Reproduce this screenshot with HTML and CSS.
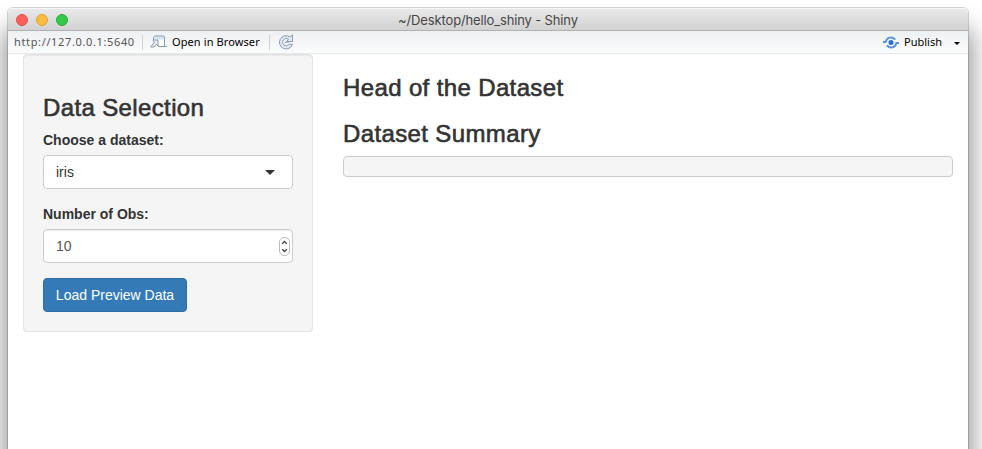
FILE: index.html
```html
<!DOCTYPE html>
<html lang="en">
<head>
<meta charset="utf-8">
<title>~/Desktop/hello_shiny - Shiny</title>
<link rel="stylesheet" href="styles.css">
</head>
<body>
<div class="window">
  <header class="titlebar">
    <div class="lights"><i class="light red"></i><i class="light yellow"></i><i class="light green"></i></div>
    <span class="title">~/Desktop/hello_shiny - Shiny</span>
  </header>
  <nav class="toolbar">
    <span class="url">http://127.0.0.1:5640</span>
    <i class="divider"></i>
    <svg class="icon-open" width="18" height="14" viewBox="0 0 18 14">
      <path d="M4.500 1.500h10v10h-10z" fill="#fff"/>
      <path d="M4.500 1.500h10v3h-10z" fill="#d2e7f5"/>
      <path d="M3.500 5V2.500Q3.700 1 5.500 1h8Q14.500 1 14.500 2.200V11.500M8 11.500h8.800" fill="none" stroke="#8d9aae"/>
      <path d="M3 5h5v6L6.300 9.200 4 12H.6L4.300 7.500z" fill="#e4edf6" stroke="#8492a8" stroke-width=".9"/>
    </svg>
    <span class="open">Open in Browser</span>
    <i class="divider second"></i>
    <svg class="icon-reload" width="16" height="16" viewBox="0 0 16 16">
      <path d="M11.800 2.900 14.500.9v6.600H8.500L10.500 5.300A3.700 3.700 0 1 0 11.300 10.200H14.400A6.600 6.600 0 1 1 11.800 2.900Z" fill="#e2eaf5" stroke="#8d9ab0"/>
      <path d="M10.800 8.200H8.200Q7 8.200 7 9.300" stroke="#8d9ab0" fill="none"/>
    </svg>
    <svg class="icon-publish" width="16" height="13" viewBox="0 0 16 13">
      <circle cx="8" cy="6.500" r="2.500" fill="#2673d9"/>
      <path d="M0 6h2.600C4 .9 8.500.2 12.300 3.500M16 7h-2.600C12 12.100 7.500 12.800 3.700 9.500" fill="none" stroke="#5b93da" stroke-width="1.900"/>
    </svg>
    <span class="publish">Publish</span>
    <i class="caret small"></i>
  </nav>
  <main class="content">
    <form class="sidebar">
      <h3>Data Selection</h3>
      <label>Choose a dataset:</label>
      <div class="field select"><span>iris</span><i class="caret"></i></div>
      <label>Number of Obs:</label>
      <div class="field number"><span>10</span>
        <svg width="11" height="19" viewBox="0 0 11 19"><rect x=".5" y=".5" width="10" height="18" rx="4.500" fill="#fff" stroke="#bcbcbc"/><path d="M3.200 6.800 5.500 4.500l2.300 2.300M3.200 12.200l2.300 2.300 2.300-2.300" fill="none" stroke="#444" stroke-width="1.300"/></svg>
      </div>
      <button type="button">Load Preview Data</button>
    </form>
    <section class="output">
      <h3 class="head">Head of the Dataset</h3>
      <h3 class="summary">Dataset Summary</h3>
      <pre></pre>
    </section>
  </main>
</div>
</body>
</html>
```
FILE: styles.css
```css
* { box-sizing: border-box; }
html, body { margin: 0; height: 449px; overflow: hidden; }
body {
  padding: 8px 14px 0 8px;
  background: #fff;
  color: #333;
  font: 14px/20px "Liberation Sans", Arial, sans-serif;
}
.window {
  height: 441px;
  border-radius: 5px 5px 0 0;
  background: #fff;
  box-shadow: 0 0 0 1px rgba(0,0,0,.16), 0 24px 24px 4px rgba(0,0,0,.42);
}
.titlebar {
  position: relative;
  display: flex;
  align-items: center;
  justify-content: center;
  height: 23px;
  border-top: 1px solid #f7f7f7;
  border-bottom: 1px solid #b1b1b1;
  border-radius: 5px 5px 0 0;
  background: linear-gradient(#e9e9e9, #d2d2d2);
}
.lights { position: absolute; left: 8px; top: 5px; display: flex; gap: 8px; }
.light { width: 12px; height: 12px; border: 1px solid; border-radius: 50%; }
.red { background: #fc605b; border-color: #e2504b; }
.yellow { background: #fdbc40; border-color: #e0a030; }
.green { background: #34c84a; border-color: #28ad38; }
.title { font: 13px/20px Inter, sans-serif; letter-spacing: -.14px; color: #464646; }
.toolbar {
  display: flex;
  align-items: center;
  height: 23px;
  padding: 0 8px 0 6px;
  border-bottom: 1px solid #e6e8e9;
  background: linear-gradient(#eef1f3, #fbfcfc);
  font: 11px/20px "Noto Sans", sans-serif;
  color: #000;
  white-space: nowrap;
}
.url { width: 121px; color: #555; letter-spacing: .64px; }
.divider { width: 1px; height: 15px; margin: 0 7px; background: #cfd3d6; }
.icon-open { margin-right: 4px; }
.open { width: 88px; letter-spacing: .1px; }
.divider.second { margin: 0 8px 0 9px; }
.icon-publish { margin: 1px 5px 0 auto; }
.publish { width: 39px; margin-right: 11px; }
.caret { width: 0; height: 0; border: 5px solid transparent; border-top-color: #333; border-bottom: 0; }
.caret.small { border-width: 3px 3px 0; border-top-color: #000; margin-top: 2px; }
.content { display: flex; gap: 30px; padding: 0 15px; }
.sidebar {
  width: 290px;
  height: 278px;
  padding: 40px 19px 0;
  border: 1px solid #e3e3e3;
  border-radius: 4px;
  background: #f5f5f5;
  box-shadow: inset 0 1px 1px rgba(0,0,0,.05);
}
h3 {
  margin: 0;
  font-size: 24px;
  font-weight: 400;
  line-height: 26px;
  letter-spacing: .37px;
  -webkit-text-stroke: .6px #333;
  white-space: nowrap;
}
.sidebar h3 { margin-bottom: 9px; }
label { display: block; font-weight: 700; margin-bottom: 5px; }
.field {
  display: flex;
  align-items: center;
  justify-content: space-between;
  height: 34px;
  margin-bottom: 15px;
  padding: 0 17px 0 12px;
  border: 1px solid #ccc;
  border-radius: 4px;
  background: #fff;
}
.number { padding-right: 2px; color: #555; box-shadow: inset 0 1px 1px rgba(0,0,0,.075); }
button {
  display: block;
  width: 144px;
  height: 34px;
  padding: 0;
  border: 1px solid #2e6da4;
  border-radius: 4px;
  background: #337ab7;
  color: #fff;
  font: 14px/20px "Liberation Sans", Arial, sans-serif;
}
.output { flex: 1; padding-top: 21px; }
.head { margin-bottom: 20px; }
.summary { margin-bottom: 9px; }
pre { height: 21px; margin: 0; border: 1px solid #ccc; border-radius: 4px; background: #f5f5f5; }
```
